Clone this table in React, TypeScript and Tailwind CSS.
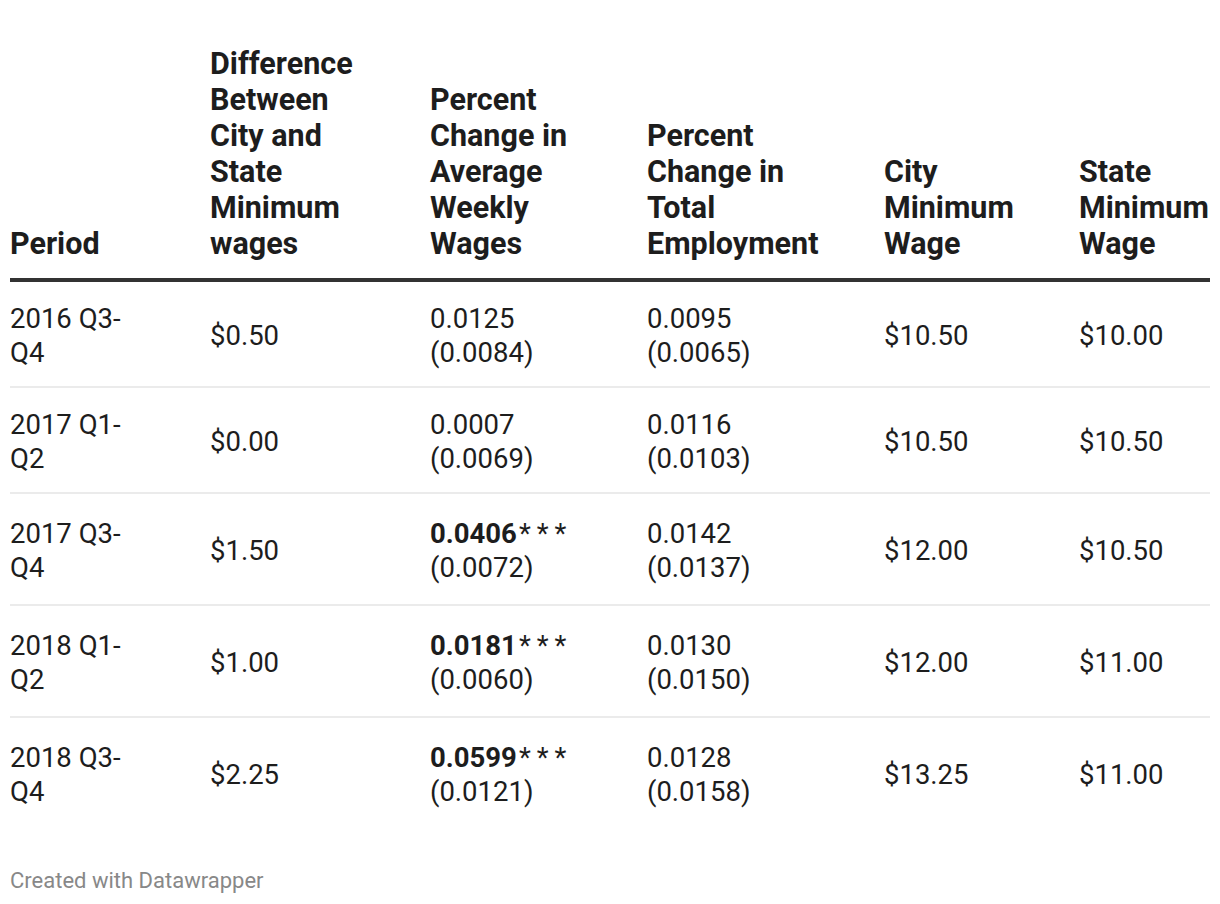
import React from "react";

type Cell = { b?: string; v: string; s?: string };

const rows: { period: string; diff: string; wk: Cell; emp: Cell; city: string; state: string; h: string }[] = [
  { period: "2016 Q3-\nQ4", diff: "$0.50", wk: { v: "0.0125", s: "(0.0084)" }, emp: { v: "0.0095", s: "(0.0065)" }, city: "$10.50", state: "$10.00", h: "h-[106px]" },
  { period: "2017 Q1-\nQ2", diff: "$0.00", wk: { v: "0.0007", s: "(0.0069)" }, emp: { v: "0.0116", s: "(0.0103)" }, city: "$10.50", state: "$10.50", h: "h-[106px]" },
  { period: "2017 Q3-\nQ4", diff: "$1.50", wk: { b: "0.0406", v: "***", s: "(0.0072)" }, emp: { v: "0.0142", s: "(0.0137)" }, city: "$12.00", state: "$10.50", h: "h-[112px]" },
  { period: "2018 Q1-\nQ2", diff: "$1.00", wk: { b: "0.0181", v: "***", s: "(0.0060)" }, emp: { v: "0.0130", s: "(0.0150)" }, city: "$12.00", state: "$11.00", h: "h-[112px]" },
  { period: "2018 Q3-\nQ4", diff: "$2.25", wk: { b: "0.0599", v: "***", s: "(0.0121)" }, emp: { v: "0.0128", s: "(0.0158)" }, city: "$13.25", state: "$11.00", h: "h-[110px]" },
];

const grid = "grid grid-cols-[200px_220px_217px_237px_195px_131px]";

function Num({ c }: { c: Cell }) {
  return (
    <div className="flex flex-col">
      <div>
        {c.b && <span className="font-bold">{c.b}</span>}
        <span className={c.b ? "tracking-[6px] pl-[2px]" : ""}>{c.v}</span>
      </div>
      <div>{c.s}</div>
    </div>
  );
}

export default function App() {
  return (
    <div className="w-[1220px] h-[904px] bg-white px-[10px] pt-[46px] text-[#1d1d1d]" style={{ fontFamily: "Roboto, 'Liberation Sans', sans-serif" }}>
      <div className={`${grid} items-end text-[30.5px] leading-[36px] font-bold pb-[16px] border-b-4 border-[#333333]`}>
        <div>Period</div>
        <div>Difference<br />Between<br />City and<br />State<br />Minimum<br />wages</div>
        <div>Percent<br />Change in<br />Average<br />Weekly<br />Wages</div>
        <div>Percent<br />Change in<br />Total<br />Employment</div>
        <div>City<br />Minimum<br />Wage</div>
        <div className="whitespace-nowrap">State<br />Minimum<br />Wage</div>
      </div>
      {rows.map((r, i) => (
        <div key={i} className={`${grid} items-center ${r.h} pt-[4px] text-[27.5px] leading-[34px] ${i < rows.length - 1 ? "border-b-2 border-[#ebebeb]" : ""}`}>
          <div className="whitespace-pre-line">{r.period}</div>
          <div>{r.diff}</div>
          <Num c={r.wk} />
          <Num c={r.emp} />
          <div>{r.city}</div>
          <div>{r.state}</div>
        </div>
      ))}
      <div className="mt-[40px] text-[22px] leading-[26px] text-[#888888]">Created with Datawrapper</div>
    </div>
  );
}
